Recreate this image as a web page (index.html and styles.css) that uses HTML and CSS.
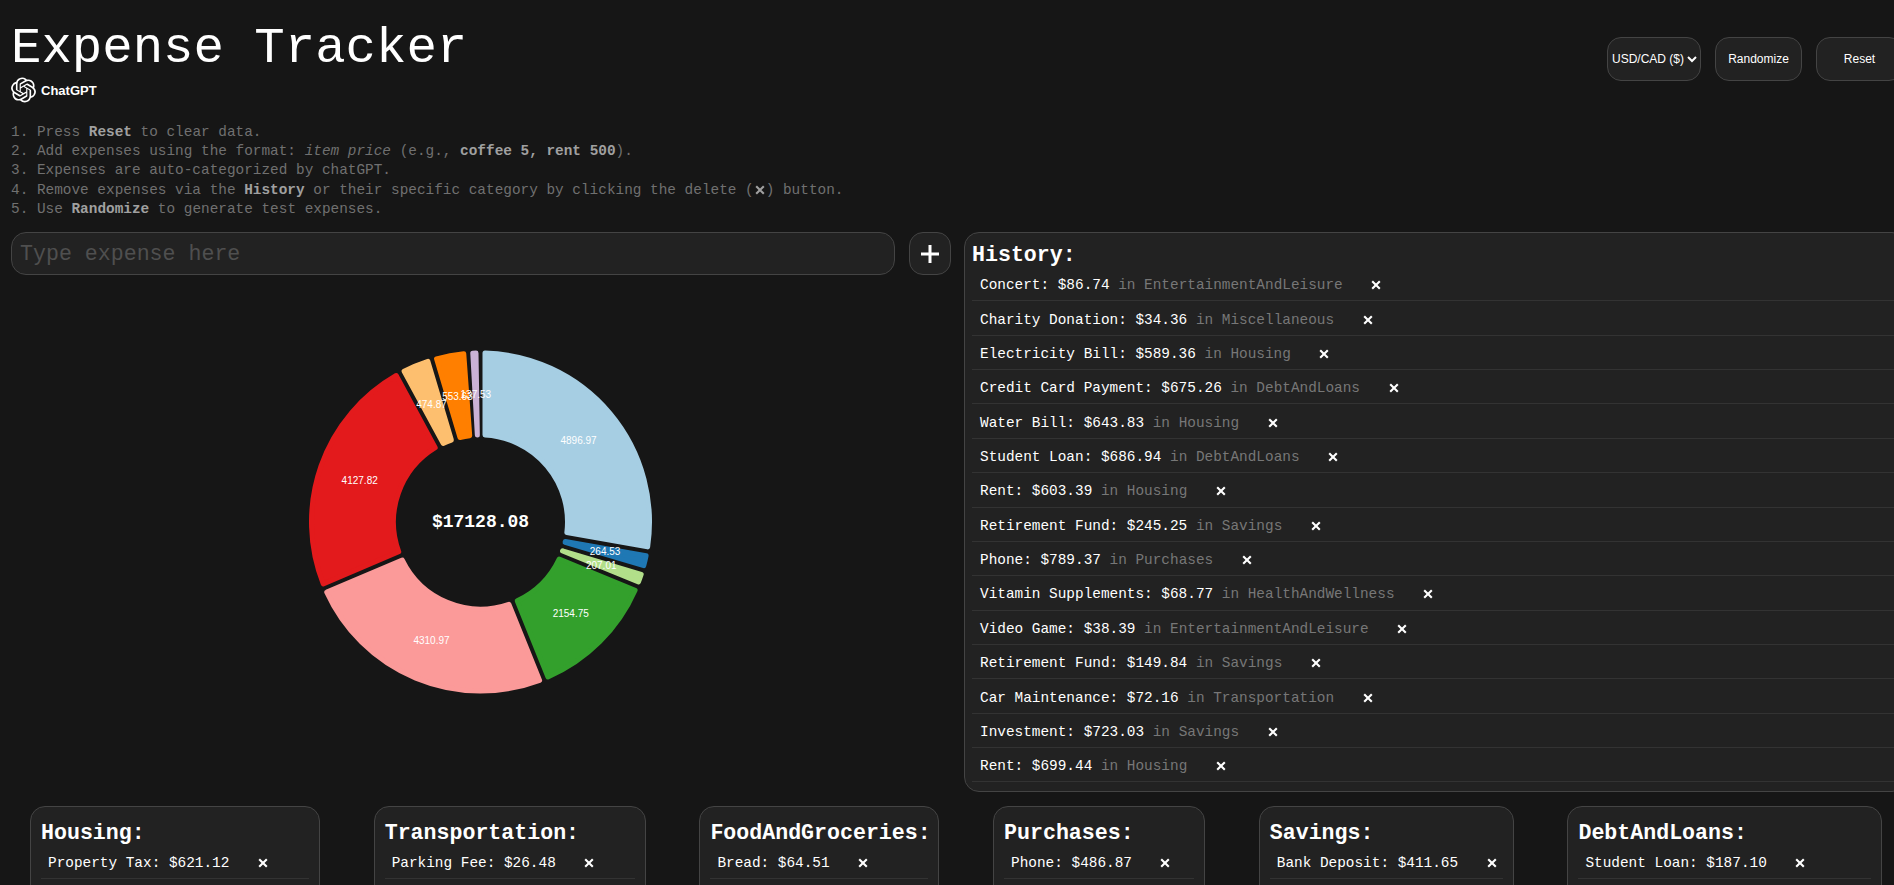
FILE: index.html
```html
<!DOCTYPE html>
<html lang="en">
<head>
    <meta charset="UTF-8">
    <title>Expense Tracker</title>
    <link rel="stylesheet" href="styles.css">
</head>
<body>
    <svg class="sprite" width="0" height="0">
        <symbol id="icon-x" viewBox="0 0 10 10">
            <path d="M1.2 1.2 8.8 8.8M8.8 1.2 1.2 8.8" fill="none" stroke="currentColor" stroke-width="2.1"/>
        </symbol>
    </svg>

    <div class="page">
        <header class="top">
            <div>
                <h1>Expense Tracker</h1>
                <div class="brand">
                    <svg class="brand-logo" viewBox="0 0 24 24"><path fill="currentColor" d="M22.2819 9.8211a5.9847 5.9847 0 0 0-.5157-4.9108 6.0462 6.0462 0 0 0-6.5098-2.9A6.0651 6.0651 0 0 0 4.9807 4.1818a5.9847 5.9847 0 0 0-3.9977 2.9 6.0462 6.0462 0 0 0 .7427 7.0966 5.98 5.98 0 0 0 .511 4.9107 6.051 6.051 0 0 0 6.5146 2.9001A5.9847 5.9847 0 0 0 13.2599 24a6.0557 6.0557 0 0 0 5.7718-4.2058 5.9894 5.9894 0 0 0 3.9977-2.9001 6.0557 6.0557 0 0 0-.7475-7.0729zm-9.022 12.6081a4.4755 4.4755 0 0 1-2.8764-1.0408l.1419-.0804 4.7783-2.7582a.7948.7948 0 0 0 .3927-.6813v-6.7369l2.02 1.1686a.071.071 0 0 1 .038.052v5.5826a4.504 4.504 0 0 1-4.4945 4.4944zm-9.6607-4.1254a4.4708 4.4708 0 0 1-.5346-3.0137l.142.0852 4.783 2.7582a.7712.7712 0 0 0 .7806 0l5.8428-3.3685v2.3324a.0804.0804 0 0 1-.0332.0615L9.74 19.9502a4.4992 4.4992 0 0 1-6.1408-1.6464zM2.3408 7.8956a4.485 4.485 0 0 1 2.3655-1.9728V11.6a.7664.7664 0 0 0 .3879.6765l5.8144 3.3543-2.0201 1.1685a.0757.0757 0 0 1-.071 0l-4.8303-2.7865A4.504 4.504 0 0 1 2.3408 7.872zm16.5963 3.8558L13.1038 8.364 15.1192 7.2a.0757.0757 0 0 1 .071 0l4.8303 2.7913a4.4944 4.4944 0 0 1-.6765 8.1042v-5.6772a.79.79 0 0 0-.407-.667zm2.0107-3.0231l-.142-.0852-4.7735-2.7818a.7759.7759 0 0 0-.7854 0L9.409 9.2297V6.8974a.0662.0662 0 0 1 .0284-.0615l4.8303-2.7866a4.4992 4.4992 0 0 1 6.6802 4.66zM8.3065 12.863l-2.02-1.1638a.0804.0804 0 0 1-.038-.0567V6.0742a4.4992 4.4992 0 0 1 7.3757-3.4537l-.142.0805L8.704 5.459a.7948.7948 0 0 0-.3927.6813zm1.0976-2.3654l2.602-1.4998 2.6069 1.4998v2.9994l-2.5974 1.4997-2.6067-1.4997Z"/></svg>
                    <span>ChatGPT</span>
                </div>
            </div>
            <div class="controls">
                <select class="ctrl currency">
                    <option>USD/CAD ($)</option>
                </select>
                <button class="ctrl">Randomize</button>
                <button class="ctrl">Reset</button>
            </div>
        </header>

        <ol class="steps">
            <li>Press <b>Reset</b> to clear data.</li>
            <li>Add expenses using the format: <i>item price</i> (e.g., <b>coffee 5, rent 500</b>).</li>
            <li>Expenses are auto-categorized by chatGPT.</li>
            <li>Remove expenses via the <b>History</b> or their specific category by clicking the delete (<svg class="step-x"><use href="#icon-x"/></svg>) button.</li>
            <li>Use <b>Randomize</b> to generate test expenses.</li>
        </ol>

        <main class="main">
            <section>
                <form class="add-row">
                    <input class="add-input" type="text" placeholder="Type expense here">
                    <button class="add-btn" type="button" aria-label="Add">
                        <svg width="20" height="20" viewBox="0 0 20 20"><path d="M10 1v18M1 10h18" stroke="currentColor" stroke-width="3"/></svg>
                    </button>
                </form>
                <svg id="chart" class="chart" width="360" height="360" viewBox="0 0 360 360">
                    <text class="chart-total" x="179.5" y="180">$17128.08</text>
                </svg>
            </section>

            <section class="panel history">
                <h2>History:</h2>
                <ul class="rows">
                    <li>Concert: $86.74 <span class="cat">in EntertainmentAndLeisure</span><svg class="del"><use href="#icon-x"/></svg></li>
                    <li>Charity Donation: $34.36 <span class="cat">in Miscellaneous</span><svg class="del"><use href="#icon-x"/></svg></li>
                    <li>Electricity Bill: $589.36 <span class="cat">in Housing</span><svg class="del"><use href="#icon-x"/></svg></li>
                    <li>Credit Card Payment: $675.26 <span class="cat">in DebtAndLoans</span><svg class="del"><use href="#icon-x"/></svg></li>
                    <li>Water Bill: $643.83 <span class="cat">in Housing</span><svg class="del"><use href="#icon-x"/></svg></li>
                    <li>Student Loan: $686.94 <span class="cat">in DebtAndLoans</span><svg class="del"><use href="#icon-x"/></svg></li>
                    <li>Rent: $603.39 <span class="cat">in Housing</span><svg class="del"><use href="#icon-x"/></svg></li>
                    <li>Retirement Fund: $245.25 <span class="cat">in Savings</span><svg class="del"><use href="#icon-x"/></svg></li>
                    <li>Phone: $789.37 <span class="cat">in Purchases</span><svg class="del"><use href="#icon-x"/></svg></li>
                    <li>Vitamin Supplements: $68.77 <span class="cat">in HealthAndWellness</span><svg class="del"><use href="#icon-x"/></svg></li>
                    <li>Video Game: $38.39 <span class="cat">in EntertainmentAndLeisure</span><svg class="del"><use href="#icon-x"/></svg></li>
                    <li>Retirement Fund: $149.84 <span class="cat">in Savings</span><svg class="del"><use href="#icon-x"/></svg></li>
                    <li>Car Maintenance: $72.16 <span class="cat">in Transportation</span><svg class="del"><use href="#icon-x"/></svg></li>
                    <li>Investment: $723.03 <span class="cat">in Savings</span><svg class="del"><use href="#icon-x"/></svg></li>
                    <li>Rent: $699.44 <span class="cat">in Housing</span><svg class="del"><use href="#icon-x"/></svg></li>
                </ul>
            </section>
        </main>

        <div class="cards">
            <section class="panel card">
                <h2>Housing:</h2>
                <ul class="rows"><li>Property Tax: $621.12<svg class="del"><use href="#icon-x"/></svg></li></ul>
            </section>
            <section class="panel card">
                <h2>Transportation:</h2>
                <ul class="rows"><li>Parking Fee: $26.48<svg class="del"><use href="#icon-x"/></svg></li></ul>
            </section>
            <section class="panel card">
                <h2>FoodAndGroceries:</h2>
                <ul class="rows"><li>Bread: $64.51<svg class="del"><use href="#icon-x"/></svg></li></ul>
            </section>
            <section class="panel card">
                <h2>Purchases:</h2>
                <ul class="rows"><li>Phone: $486.87<svg class="del"><use href="#icon-x"/></svg></li></ul>
            </section>
            <section class="panel card">
                <h2>Savings:</h2>
                <ul class="rows"><li>Bank Deposit: $411.65<svg class="del"><use href="#icon-x"/></svg></li></ul>
            </section>
            <section class="panel card">
                <h2>DebtAndLoans:</h2>
                <ul class="rows"><li>Student Loan: $187.10<svg class="del"><use href="#icon-x"/></svg></li></ul>
            </section>
        </div>
    </div>

    <script src="chart.js"></script>
</body>
</html>
```

FILE: styles.css
```css
html, body {
    height: 100%;
    overflow: hidden;
}
body {
    margin: 0;
    background-color: #161616;
    color: white;
    font-family: "Liberation Mono", monospace;
    font-size: 14.4px;
}
.sprite {
    display: block;
    height: 0;
}
.page {
    box-sizing: border-box;
    width: 1907px;
    padding: 21px 0 0 11px;
}

.top {
    display: flex;
    justify-content: space-between;
    align-items: flex-start;
    padding-right: 4px;
}
h1 {
    margin: 0;
    font-size: 50.7px;
    font-weight: normal;
    line-height: 56px;
}
.brand {
    display: flex;
    align-items: center;
    gap: 5px;
    height: 26px;
    font-family: "Liberation Sans", Arial, sans-serif;
    font-size: 13px;
    font-weight: bold;
}
.brand-logo {
    width: 25px;
    height: 26px;
}
.controls {
    display: flex;
    gap: 14px;
    margin-top: 16px;
}
.ctrl {
    box-sizing: border-box;
    width: 87px;
    height: 44px;
    background-color: #222;
    color: white;
    border: 1px solid #444;
    border-radius: 14px;
    font-family: "Liberation Sans", Arial, sans-serif;
    font-size: 12px;
}
.currency {
    width: 94px;
    padding: 0;
}

.steps {
    margin: 19.5px 0 12.5px;
    padding: 0;
    list-style-position: inside;
    color: #707070;
    line-height: 19.4px;
}
.steps b {
    color: #a0a0a0;
}
.step-x {
    width: 12px;
    height: 10px;
    vertical-align: -1px;
    color: #a0a0a0;
}

.main {
    display: grid;
    grid-template-columns: 940px 1fr;
    column-gap: 13px;
}
.add-row {
    display: flex;
    gap: 14px;
}
.add-input {
    flex: 1;
    box-sizing: border-box;
    height: 43px;
    padding: 0 8px;
    background-color: #222;
    color: white;
    border: 1px solid #444;
    border-radius: 15px;
    font-family: inherit;
    font-size: 21.6px;
}
.add-input::placeholder {
    color: #4f4f4f;
}
.add-btn {
    display: flex;
    align-items: center;
    justify-content: center;
    box-sizing: border-box;
    width: 42px;
    height: 43px;
    padding: 0;
    background-color: #222;
    color: white;
    border: 1px solid #444;
    border-radius: 14px;
}
.chart {
    display: block;
    margin: 67px auto 0;
}
.chart-total {
    fill: white;
    font-family: "Liberation Mono", monospace;
    font-size: 18px;
    font-weight: bold;
    text-anchor: middle;
    dominant-baseline: central;
}
.chart-label {
    fill: white;
    font-family: "Liberation Sans", Arial, sans-serif;
    font-size: 10px;
    text-anchor: middle;
}

.panel {
    box-sizing: border-box;
    background-color: #222;
    border: 1px solid #444;
    border-radius: 15px;
}
h2 {
    box-sizing: border-box;
    height: 27px;
    margin: 0;
    padding-top: 2px;
    font-size: 21.6px;
    font-weight: bold;
    line-height: 27px;
}
.history {
    padding: 7px;
    height: 560px;
}
.rows {
    margin: 0;
    padding: 0;
    list-style: none;
}
.rows li {
    display: flex;
    align-items: center;
    height: 34.36px;
    box-sizing: border-box;
    padding: 3px 0 0 8px;
    border-bottom: 1px solid #333;
    white-space: pre;
}
.cat {
    color: #777;
}
.del {
    width: 10px;
    height: 10px;
    margin-left: 28.5px;
}

.cards {
    display: grid;
    grid-template-columns: 290px 272px 240px 212px 255px 315px;
    column-gap: 53.7px;
    margin: 14px 0 0 19px;
}
.card {
    min-height: 200px;
    padding: 11px 10px;
}
.card .rows li {
    padding-left: 7px;
}
```

FILE: chart.js
```js
// angles are degrees clockwise from 12 o'clock
const slices = [
    { value: 4896.97, color: '#a6cee3', from: 0, to: 100 },
    { value: 264.53, color: '#1f78b4', from: 100, to: 106.5 },
    { value: 207.01, color: '#b2df8a', from: 106.5, to: 112.3 },
    { value: 2154.75, color: '#33a02c', from: 112.3, to: 158 },
    { value: 4310.97, color: '#fb9a99', from: 158, to: 247 },
    { value: 4127.82, color: '#e31a1c', from: 247, to: 331.6 },
    { value: 474.87, color: '#fdbf6f', from: 331.6, to: 343.4 },
    { value: 553.63, color: '#ff7f00', from: 343.4, to: 355.85 },
    { value: 137.53, color: '#cab2d6', from: 355.85, to: 360 },
];

const chart = document.getElementById('chart');
const NS = 'http://www.w3.org/2000/svg';
const cx = 179.5, cy = 180;
const outer = 169, inner = 87, corner = 5, gap = 4.5;

function point(r, deg) {
    const a = deg * Math.PI / 180;
    return (cx + r * Math.sin(a)).toFixed(2) + ' ' + (cy - r * Math.cos(a)).toFixed(2);
}

function slicePath(from, to) {
    const dOut = Math.asin(gap / outer) * 180 / Math.PI;
    const dIn = Math.asin(gap / inner) * 180 / Math.PI;
    let inFrom = from + dIn, inTo = to - dIn;
    // thin slices come to a point on the inner edge
    if (inFrom > inTo) inFrom = inTo = (from + to) / 2;
    const large = to - from > 180 ? 1 : 0;
    return 'M' + point(outer, from + dOut)
        + ' A' + outer + ' ' + outer + ' 0 ' + large + ' 1 ' + point(outer, to - dOut)
        + ' L' + point(inner, inTo)
        + ' A' + inner + ' ' + inner + ' 0 ' + large + ' 0 ' + point(inner, inFrom)
        + ' Z';
}

slices.forEach(s => {
    const path = document.createElementNS(NS, 'path');
    path.setAttribute('d', slicePath(s.from, s.to));
    path.setAttribute('fill', s.color);
    path.setAttribute('stroke', s.color);
    path.setAttribute('stroke-width', corner);
    path.setAttribute('stroke-linejoin', 'round');
    chart.insertBefore(path, chart.firstChild);
});

slices.forEach(s => {
    const mid = (s.from + s.to) / 2 * Math.PI / 180;
    const label = document.createElementNS(NS, 'text');
    label.setAttribute('class', 'chart-label');
    label.setAttribute('x', cx + 128 * Math.sin(mid));
    label.setAttribute('y', cy - 128 * Math.cos(mid) + 4);
    label.textContent = s.value.toFixed(2);
    chart.appendChild(label);
});
```
